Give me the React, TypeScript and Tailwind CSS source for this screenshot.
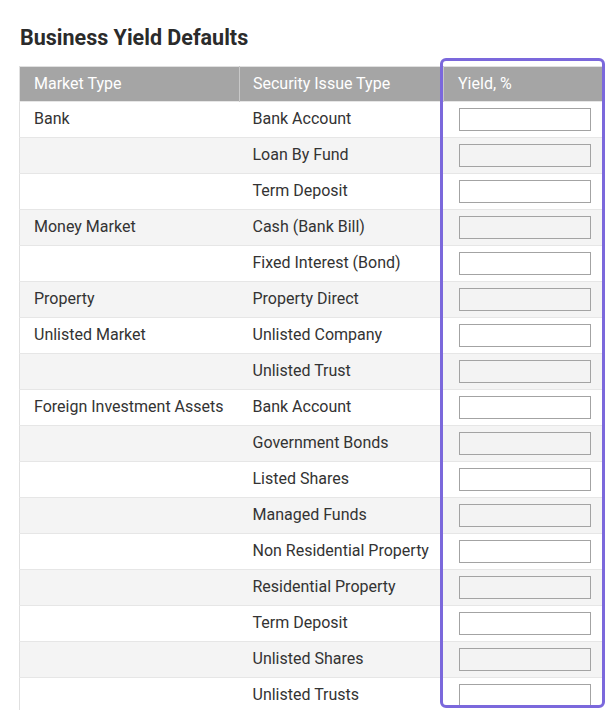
import React from "react";

const rows: [string, string][] = [
  ["Bank", "Bank Account"],
  ["", "Loan By Fund"],
  ["", "Term Deposit"],
  ["Money Market", "Cash (Bank Bill)"],
  ["", "Fixed Interest (Bond)"],
  ["Property", "Property Direct"],
  ["Unlisted Market", "Unlisted Company"],
  ["", "Unlisted Trust"],
  ["Foreign Investment Assets", "Bank Account"],
  ["", "Government Bonds"],
  ["", "Listed Shares"],
  ["", "Managed Funds"],
  ["", "Non Residential Property"],
  ["", "Residential Property"],
  ["", "Term Deposit"],
  ["", "Unlisted Shares"],
  ["", "Unlisted Trusts"],
];

export default function App() {
  return (
    <div
      className="h-[710px] overflow-hidden bg-white pl-[19px] pt-[23px] text-[#333]"
      style={{ fontFamily: "Roboto, 'Liberation Sans', sans-serif" }}
    >
      <h1 className="mb-[14px] pl-px text-[21.5px] font-bold leading-[29px] text-[#2b2b2b]">
        Business Yield Defaults
      </h1>
      <div className="relative w-[584px]">
        <table className="w-full border-collapse border-l border-t border-[#e0e0e0] text-[16px] leading-[20px]">
          <thead>
            <tr className="h-[35px] bg-[#a5a5a5] text-white">
              <th className="w-[220px] border-r border-[#c8c8c8] pl-[14px] text-left font-normal">Market Type</th>
              <th className="w-[204px] border-r border-[#c8c8c8] pl-[13px] text-left font-normal">Security Issue Type</th>
              <th className="pl-[14px] text-left font-normal">Yield, %</th>
            </tr>
          </thead>
          <tbody>
            {rows.map(([m, s], i) => {
              const even = i % 2 === 1;
              return (
                <tr
                  key={i}
                  className={`h-[36px] border-t border-[#e6e6e6] ${even ? "bg-[#f4f4f4]" : "bg-white"}`}
                >
                  <td className="pb-px pl-[14px]">{m}</td>
                  <td className="pb-px pl-[13px]">{s}</td>
                  <td className="pl-[15px]">
                    <input
                      disabled={even}
                      className={`block h-[23px] w-[132px] border border-[#a3a3a3] ${even ? "bg-[#f3f3f3]" : "bg-white"}`}
                    />
                  </td>
                </tr>
              );
            })}
          </tbody>
        </table>
        <div className="pointer-events-none absolute left-[421px] top-[-8px] h-[650px] w-[165px] rounded-[6px] border-[3px] border-[#7b68dc]" />
      </div>
    </div>
  );
}
